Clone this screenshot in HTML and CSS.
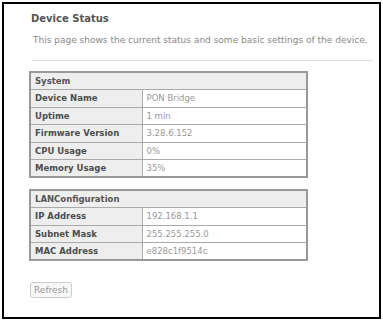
FILE: index.html
```html
<!DOCTYPE html>
<html lang="en">
<head>
  <meta charset="UTF-8" />
  <title>Device Status</title>
  <link rel="stylesheet" href="styles.css">
</head>
<body>
  <div class="frame">
    <h2 class="title">Device Status</h2>
    <p class="intro">This page shows the current status and some basic settings of the device.</p>
    <hr class="rule" />

    <table class="status">
      <tr><th colspan="2">System</th></tr>
      <tr><td class="label">Device Name</td><td class="value">PON Bridge</td></tr>
      <tr><td class="label">Uptime</td><td class="value">1 min</td></tr>
      <tr><td class="label">Firmware Version</td><td class="value">3.28.6.152</td></tr>
      <tr><td class="label">CPU Usage</td><td class="value">0%</td></tr>
      <tr><td class="label">Memory Usage</td><td class="value">35%</td></tr>
    </table>

    <table class="status">
      <tr><th colspan="2">LANConfiguration</th></tr>
      <tr><td class="label">IP Address</td><td class="value">192.168.1.1</td></tr>
      <tr><td class="label">Subnet Mask</td><td class="value">255.255.255.0</td></tr>
      <tr><td class="label">MAC Address</td><td class="value">e828c1f9514c</td></tr>
    </table>

    <button class="refresh" type="button">Refresh</button>
  </div>
</body>
</html>
```

FILE: styles.css
```css
* {
  box-sizing: border-box;
}

body {
  margin: 0;
  font-family: 'DejaVu Sans', Verdana, sans-serif;
  background: #fff;
}

.frame {
  margin: 2px;
  width: 379px;
  height: 317px;
  border: 2px solid #000;
  padding: 9px 6px 0 25px;
}

.title {
  margin: 0;
  font-size: 10px;
  font-weight: bold;
  color: #555;
  padding-left: 2px;
}

.intro {
  margin: 11px 0 0;
  padding-left: 4px;
  font-size: 9px;
  color: #888;
}

.rule {
  margin: 15px 0 0 3px;
  border: none;
  border-top: 1px solid #ddd;
}

.status {
  border-collapse: collapse;
  width: 279px;
  margin-top: 10px;
  border: 2px solid #999;
  font-size: 8.5px;
}

.status + .status {
  margin-top: 11px;
}

.status tr {
  height: 17.5px;
}

.status th,
.status td {
  border: 1px solid #aaa;
  padding: 0 4px;
  text-align: left;
}

.status th {
  background: #eee;
  color: #555;
  font-weight: bold;
}

.label {
  width: 112px;
  background: #eee;
  color: #4d4d4d;
  font-weight: bold;
}

.value {
  background: #fff;
  color: #999;
}

.refresh {
  margin-top: 21px;
  margin-left: 1px;
  font-family: 'DejaVu Sans', sans-serif;
  font-size: 9px;
  color: #999;
  background: #f7f7f7;
  border: 1px solid #ccc;
  border-radius: 3px;
  padding: 2px 3px;
}
```
